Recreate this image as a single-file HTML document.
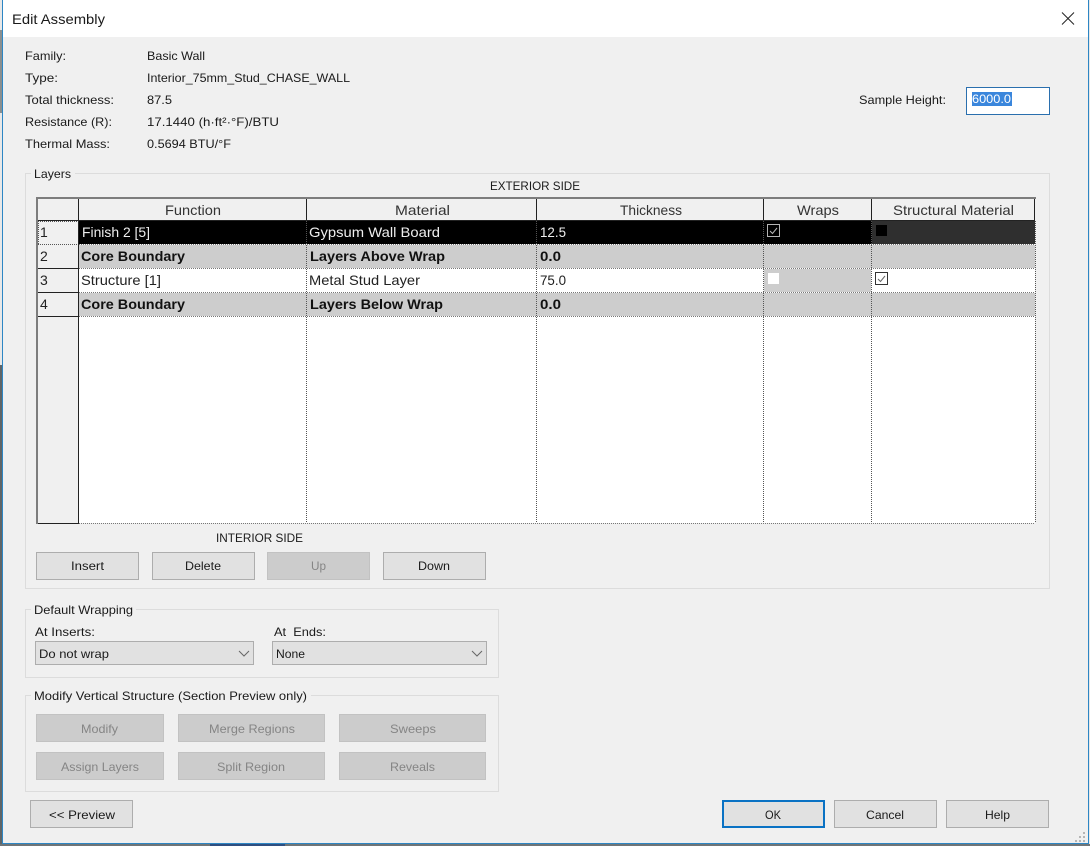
<!DOCTYPE html>
<html lang="en">
<head>
<meta charset="utf-8">
<title>Edit Assembly</title>
<style>
html,body{margin:0;padding:0;width:1090px;height:846px;overflow:hidden;background:#f0f0f0}
svg{display:block}
text{font-family:"Liberation Sans",Arial,sans-serif;font-size:12px;fill:#1a1a1a}
.c{shape-rendering:crispEdges}
.h{font-size:14px;fill:#333}
.r{font-size:14px;fill:#222}
.b{font-size:14px;font-weight:bold;fill:#111}
.w{font-size:14px;fill:#eee}
.d{fill:#858585}
.grid line{stroke:#555;stroke-width:1;stroke-dasharray:1 1}
.btn rect{fill:#e1e1e1;stroke:#adadad}
.dis rect{fill:#cccccc;stroke:#c2c2c2}
</style>
</head>
<body>
<svg width="1090" height="846" viewBox="0 0 1090 846" xmlns="http://www.w3.org/2000/svg">
<!-- backdrop strip -->
<g class="c">
<rect x="0" y="0" width="1090" height="846" fill="#e8e8e8"/>
<rect x="0" y="30" width="2" height="83" fill="#8a8f90"/>
<rect x="0" y="365" width="2" height="481" fill="#5f6568"/>
<rect x="0" y="844" width="1090" height="2" fill="#6f7578"/>
<rect x="210" y="844" width="75" height="2" fill="#2f4f80"/>
<!-- window -->
<rect x="2" y="0" width="1087" height="844" fill="#2d86c4"/>
<rect x="3" y="0" width="1085" height="843" fill="#f0f0f0"/>
<rect x="3" y="0" width="1085" height="37" fill="#ffffff"/>
</g>
<text x="12" y="24" style="font-size:14px" textLength="93" lengthAdjust="spacingAndGlyphs" fill="#222">Edit Assembly</text>
<path d="M1062 12.5 L1074 24.5 M1074 12.5 L1062 24.5" stroke="#222" stroke-width="1" fill="none"/>

<!-- info -->
<text x="25" y="60" textLength="41" lengthAdjust="spacingAndGlyphs">Family:</text>
<text x="147" y="60" textLength="58" lengthAdjust="spacingAndGlyphs">Basic Wall</text>
<text x="25" y="82" textLength="33" lengthAdjust="spacingAndGlyphs">Type:</text>
<text x="147" y="82" textLength="203" lengthAdjust="spacingAndGlyphs">Interior_75mm_Stud_CHASE_WALL</text>
<text x="25" y="104" textLength="89" lengthAdjust="spacingAndGlyphs">Total thickness:</text>
<text x="147" y="104" textLength="25" lengthAdjust="spacingAndGlyphs">87.5</text>
<text x="25" y="126" textLength="87" lengthAdjust="spacingAndGlyphs">Resistance (R):</text>
<text x="147" y="126" textLength="132" lengthAdjust="spacingAndGlyphs">17.1440 (h·ft²·°F)/BTU</text>
<text x="25" y="148" textLength="85" lengthAdjust="spacingAndGlyphs">Thermal Mass:</text>
<text x="147" y="148" textLength="84" lengthAdjust="spacingAndGlyphs">0.5694 BTU/°F</text>

<!-- sample height -->
<text x="859" y="104" textLength="87" lengthAdjust="spacingAndGlyphs">Sample Height:</text>
<g class="c">
<rect x="966.5" y="87.5" width="83" height="27" fill="#fff" stroke="#2a6fae"/>
<rect x="972" y="92" width="40" height="14" fill="#3a86dc"/>
</g>
<text x="972" y="103" textLength="39" lengthAdjust="spacingAndGlyphs" style="fill:#fff">6000.0</text>

<!-- layers group -->
<g class="c">
<rect x="25.5" y="173.5" width="1024" height="415" fill="none" stroke="#dcdcdc"/>
<rect x="31" y="168" width="44" height="12" fill="#f0f0f0"/>
</g>
<text x="34" y="178" textLength="37" lengthAdjust="spacingAndGlyphs">Layers</text>
<text x="490" y="190" textLength="90" lengthAdjust="spacingAndGlyphs">EXTERIOR SIDE</text>

<!-- table -->
<g class="c">
<rect x="37" y="198" width="998" height="325" fill="#ffffff"/>
<rect x="37" y="198" width="998" height="23" fill="#f0f0f0"/>
<rect x="37" y="198" width="41" height="325" fill="#f0f0f0"/>
<rect x="79" y="221" width="956" height="23" fill="#000"/>
<rect x="872" y="221" width="163" height="23" fill="#2f2f2f"/>
<rect x="79" y="245" width="956" height="23" fill="#cdcdcd"/>
<rect x="764" y="269" width="107" height="23" fill="#cdcdcd"/>
<rect x="79" y="293" width="956" height="23" fill="#cdcdcd"/>
<!-- outer frame -->
<rect x="36" y="197" width="1000" height="2" fill="#7d7d7d"/>
<rect x="36" y="197" width="2" height="327" fill="#7d7d7d"/>
<!-- header verticals -->
<rect x="78" y="199" width="1" height="22" fill="#222"/>
<rect x="306" y="199" width="1" height="22" fill="#222"/>
<rect x="536" y="199" width="1" height="22" fill="#222"/>
<rect x="763" y="199" width="1" height="22" fill="#222"/>
<rect x="871" y="199" width="1" height="22" fill="#222"/>
<rect x="1034" y="199" width="1" height="22" fill="#222"/>
<rect x="38" y="220" width="997" height="1" fill="#222"/>
<!-- row header lines -->
<rect x="78" y="221" width="1" height="303" fill="#222"/>
<rect x="38" y="268" width="41" height="1" fill="#222"/>
<rect x="38" y="292" width="41" height="1" fill="#222"/>
<rect x="38" y="316" width="41" height="1" fill="#222"/>
<rect x="38" y="523" width="41" height="1" fill="#222"/>
</g>
<g class="grid c">
<line x1="38" y1="221.5" x2="78" y2="221.5"/>
<line x1="38" y1="244.5" x2="78" y2="244.5"/>
<line x1="38.5" y1="221" x2="38.5" y2="244"/>
<line x1="79" y1="244.5" x2="1035" y2="244.5" style="stroke:#777"/>
<line x1="79" y1="268.5" x2="1035" y2="268.5" style="stroke:#777"/>
<line x1="79" y1="292.5" x2="1035" y2="292.5" style="stroke:#777"/>
<line x1="79" y1="316.5" x2="1035" y2="316.5" style="stroke:#777"/>
<line x1="79" y1="523.5" x2="1035" y2="523.5" style="stroke:#777"/>
<line x1="306.5" y1="221" x2="306.5" y2="523"/>
<line x1="536.5" y1="221" x2="536.5" y2="523"/>
<line x1="763.5" y1="221" x2="763.5" y2="523"/>
<line x1="871.5" y1="221" x2="871.5" y2="523"/>
<line x1="1035.5" y1="221" x2="1035.5" y2="523"/>
</g>

<text class="h" x="165" y="215" textLength="56" lengthAdjust="spacingAndGlyphs">Function</text>
<text class="h" x="395" y="215" textLength="55" lengthAdjust="spacingAndGlyphs">Material</text>
<text class="h" x="620" y="215" textLength="62" lengthAdjust="spacingAndGlyphs">Thickness</text>
<text class="h" x="797" y="215" textLength="42" lengthAdjust="spacingAndGlyphs">Wraps</text>
<text class="h" x="893" y="215" textLength="121" lengthAdjust="spacingAndGlyphs">Structural Material</text>

<text class="r" x="40" y="237">1</text>
<text class="r" x="40" y="261">2</text>
<text class="r" x="40" y="285">3</text>
<text class="r" x="40" y="309">4</text>

<text class="w" x="82" y="237" textLength="68" lengthAdjust="spacingAndGlyphs">Finish 2 [5]</text>
<text class="w" x="309" y="237" textLength="131" lengthAdjust="spacingAndGlyphs">Gypsum Wall Board</text>
<text class="w" x="540" y="237" textLength="26" lengthAdjust="spacingAndGlyphs">12.5</text>

<text class="b" x="81" y="261" textLength="104" lengthAdjust="spacingAndGlyphs">Core Boundary</text>
<text class="b" x="310" y="261" textLength="135" lengthAdjust="spacingAndGlyphs">Layers Above Wrap</text>
<text class="b" x="540" y="261" textLength="21" lengthAdjust="spacingAndGlyphs">0.0</text>

<text class="r" x="81" y="285" textLength="80" lengthAdjust="spacingAndGlyphs">Structure [1]</text>
<text class="r" x="309" y="285" textLength="111" lengthAdjust="spacingAndGlyphs">Metal Stud Layer</text>
<text class="r" x="540" y="285" textLength="26" lengthAdjust="spacingAndGlyphs">75.0</text>

<text class="b" x="81" y="309" textLength="104" lengthAdjust="spacingAndGlyphs">Core Boundary</text>
<text class="b" x="310" y="309" textLength="133" lengthAdjust="spacingAndGlyphs">Layers Below Wrap</text>
<text class="b" x="540" y="309" textLength="21" lengthAdjust="spacingAndGlyphs">0.0</text>

<!-- checkboxes -->
<g class="c"><rect x="767.5" y="224.5" width="12" height="12" fill="none" stroke="#b5b5b5"/></g>
<path d="M770 231 L772.5 233.5 L777 228" stroke="#b8b8b8" fill="none"/>
<g class="c">
<rect x="876" y="225" width="11" height="11" fill="#000"/>
<rect x="768" y="273" width="11" height="11" fill="#fff"/>
<rect x="875.5" y="272.5" width="12" height="12" fill="#fff" stroke="#333"/>
</g>
<path d="M878 279 L880.5 281.5 L885 276" stroke="#666" fill="none"/>

<text x="216" y="542" textLength="87" lengthAdjust="spacingAndGlyphs">INTERIOR SIDE</text>

<!-- layer buttons -->
<g class="btn c">
<rect x="36.5" y="552.5" width="102" height="27"/>
<rect x="152.5" y="552.5" width="102" height="27"/>
<rect x="383.5" y="552.5" width="102" height="27"/>
</g>
<g class="dis c"><rect x="267.5" y="552.5" width="102" height="27"/></g>
<text x="71" y="570" textLength="33" lengthAdjust="spacingAndGlyphs">Insert</text>
<text x="185" y="570" textLength="36" lengthAdjust="spacingAndGlyphs">Delete</text>
<text class="d" x="311" y="570" textLength="15" lengthAdjust="spacingAndGlyphs">Up</text>
<text x="418" y="570" textLength="32" lengthAdjust="spacingAndGlyphs">Down</text>

<!-- default wrapping -->
<g class="c">
<rect x="25.5" y="609.5" width="473" height="68" fill="none" stroke="#dcdcdc"/>
<rect x="31" y="604" width="105" height="12" fill="#f0f0f0"/>
</g>
<text x="34" y="614" textLength="99" lengthAdjust="spacingAndGlyphs">Default Wrapping</text>
<text x="35" y="636" textLength="60" lengthAdjust="spacingAndGlyphs">At Inserts:</text>
<text x="274" y="636" textLength="52" lengthAdjust="spacingAndGlyphs">At&#160;&#160;Ends:</text>
<g class="btn c">
<rect x="35.5" y="641.5" width="218" height="23"/>
<rect x="272.5" y="641.5" width="214" height="23"/>
</g>
<text x="39" y="658" textLength="70" lengthAdjust="spacingAndGlyphs">Do not wrap</text>
<text x="276" y="658" textLength="29" lengthAdjust="spacingAndGlyphs">None</text>
<path d="M239 651 L244 656 L249 651 M472 651 L477 656 L482 651" stroke="#666" fill="none"/>

<!-- modify group -->
<g class="c">
<rect x="25.5" y="695.5" width="473" height="96" fill="none" stroke="#dcdcdc"/>
<rect x="31" y="690" width="280" height="12" fill="#f0f0f0"/>
</g>
<text x="34" y="700" textLength="273" lengthAdjust="spacingAndGlyphs">Modify Vertical Structure (Section Preview only)</text>
<g class="dis c">
<rect x="36.5" y="714.5" width="127" height="27"/>
<rect x="178.5" y="714.5" width="146" height="27"/>
<rect x="339.5" y="714.5" width="146" height="27"/>
<rect x="36.5" y="752.5" width="127" height="27"/>
<rect x="178.5" y="752.5" width="146" height="27"/>
<rect x="339.5" y="752.5" width="146" height="27"/>
</g>
<text class="d" x="81" y="733" textLength="37" lengthAdjust="spacingAndGlyphs">Modify</text>
<text class="d" x="209" y="733" textLength="86" lengthAdjust="spacingAndGlyphs">Merge Regions</text>
<text class="d" x="390" y="733" textLength="46" lengthAdjust="spacingAndGlyphs">Sweeps</text>
<text class="d" x="61" y="771" textLength="78" lengthAdjust="spacingAndGlyphs">Assign Layers</text>
<text class="d" x="217" y="771" textLength="68" lengthAdjust="spacingAndGlyphs">Split Region</text>
<text class="d" x="390" y="771" textLength="45" lengthAdjust="spacingAndGlyphs">Reveals</text>

<!-- bottom buttons -->
<g class="btn c">
<rect x="30.5" y="800.5" width="102" height="27"/>
<rect x="834.5" y="800.5" width="102" height="27"/>
<rect x="946.5" y="800.5" width="102" height="27"/>
</g>
<g class="c"><rect x="723" y="801" width="101" height="26" fill="#e1e1e1" stroke="#0a72c4" stroke-width="2"/></g>
<text x="49" y="819" textLength="66" lengthAdjust="spacingAndGlyphs">&lt;&lt; Preview</text>
<text x="765" y="819" textLength="16" lengthAdjust="spacingAndGlyphs">OK</text>
<text x="866" y="819" textLength="38" lengthAdjust="spacingAndGlyphs">Cancel</text>
<text x="985" y="819" textLength="25" lengthAdjust="spacingAndGlyphs">Help</text>

<!-- resize grip -->
<g class="c" fill="#b5b5b5">
<rect x="1083" y="832" width="2" height="2"/>
<rect x="1079" y="836" width="2" height="2"/>
<rect x="1083" y="836" width="2" height="2"/>
<rect x="1075" y="840" width="2" height="2"/>
<rect x="1079" y="840" width="2" height="2"/>
<rect x="1083" y="840" width="2" height="2"/>
</g>
</svg>
</body>
</html>
